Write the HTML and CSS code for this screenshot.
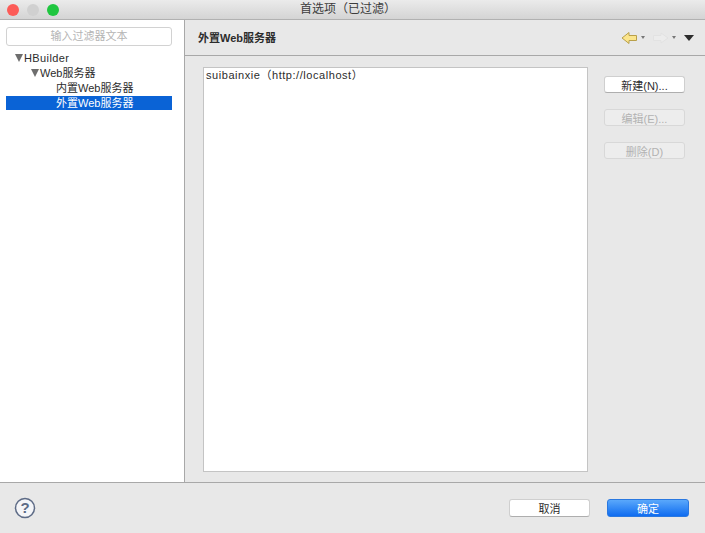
FILE: index.html
```html
<!DOCTYPE html>
<html>
	<head>
		<meta charset="utf-8">
		<title>首选项（已过滤）</title>
		<link rel="stylesheet" href="styles.css">
	</head>
	<body>
		<div class="titlebar">
			<div class="lights">
				<span class="light red"></span>
				<span class="light grey"></span>
				<span class="light green"></span>
			</div>
			<div class="title">首选项（已过滤）</div>
		</div>
		<div class="main">
			<div class="sidebar">
				<div class="filter">输入过滤器文本</div>
				<div class="tree">
					<div class="row level0"><span class="arrow"></span>HBuilder</div>
					<div class="row level1"><span class="arrow"></span>Web服务器</div>
					<div class="row level2">内置Web服务器</div>
					<div class="row level2 selected">外置Web服务器</div>
				</div>
			</div>
			<div class="panel">
				<div class="panel_head">
					<div class="panel_title">外置Web服务器</div>
					<div class="tools">
						<svg class="back" width="17" height="14" viewBox="0 0 17 14">
							<path d="M1 7 L8 1.500 V4.500 H15.500 V9.500 H8 V12.500 Z" fill="#fbe58c" stroke="#b9a04a" stroke-width="1"/>
						</svg>
						<span class="drop small"></span>
						<svg class="forward" width="17" height="14" viewBox="0 0 17 14">
							<path d="M16 7 L9 2 V4.500 H1.500 V9.500 H9 V12 Z" fill="#ececec" stroke="#e2e2e2" stroke-width="1"/>
						</svg>
						<span class="drop small"></span>
						<span class="drop big"></span>
					</div>
				</div>
				<div class="panel_body">
					<div class="list">suibainxie（http://localhost）</div>
					<div class="side_buttons">
						<button class="btn">新建(N)...</button>
						<button class="btn off">编辑(E)...</button>
						<button class="btn off">删除(D)</button>
					</div>
				</div>
			</div>
		</div>
		<div class="footer">
			<svg class="help" width="22" height="22" viewBox="0 0 22 22">
				<circle cx="11" cy="11" r="9.500" fill="#f4f5f8" stroke="#5d6b86" stroke-width="1.500"/>
				<text x="11" y="16" text-anchor="middle" class="help_mark">?</text>
			</svg>
			<div class="footer_buttons">
				<button class="btn wide">取消</button>
				<button class="btn wide primary">确定</button>
			</div>
		</div>
	</body>
</html>
```
FILE: styles.css
```css
html, body {
	margin: 0;
	padding: 0;
}

body {
	width: 705px;
	height: 533px;
	overflow: hidden;
	display: flex;
	flex-direction: column;
	background: #e8e8e8;
	color: #2c2c2c;
	font-family: "Liberation Sans", "Noto Sans CJK SC", sans-serif;
	font-size: 11px;
}

.titlebar {
	height: 19px;
	flex: none;
	display: flex;
	align-items: center;
	position: relative;
	background: linear-gradient(#ebebeb, #d4d4d4);
	border-bottom: 1px solid #b1b1b1;
}

.lights {
	display: flex;
	gap: 8px;
	margin-left: 7px;
}

.light {
	width: 12px;
	height: 12px;
	border-radius: 50%;
}

.red {
	background: #fc5b57;
}

.grey {
	background: #d0d0d0;
}

.green {
	background: #1fc63f;
}

.title {
	position: absolute;
	left: 0;
	right: 9px;
	top: 0;
	line-height: 19px;
	text-align: center;
	font-size: 12px;
	color: #3c3c3c;
}

.main {
	flex: 1;
	display: flex;
	min-height: 0;
	border-bottom: 1px solid #a8a8a8;
}

.sidebar {
	width: 185px;
	flex: none;
	box-sizing: border-box;
	padding: 7px 12px 0 6px;
	background: #fff;
	border-right: 1px solid #a8a8a8;
}

.filter {
	height: 17px;
	line-height: 17px;
	border: 1px solid #d2d2d2;
	border-radius: 3px;
	text-align: center;
	color: #b4b4b4;
}

.tree {
	margin-top: 4px;
}

.row {
	height: 15px;
	line-height: 14px;
	white-space: nowrap;
	display: flex;
	align-items: center;
}

.level0 {
	padding-left: 9px;
	letter-spacing: 0.4px;
}

.level1 {
	padding-left: 25px;
}

.level2 {
	padding-left: 50px;
}

.row.selected {
	height: 14px;
	margin-top: 1px;
	background: #0a63d6;
	color: #fff;
}

.arrow {
	width: 0;
	height: 0;
	margin-right: 1px;
	border-left: 4px solid transparent;
	border-right: 4px solid transparent;
	border-top: 8px solid #6e6e6e;
}

.panel {
	flex: 1;
	display: flex;
	flex-direction: column;
	min-width: 0;
}

.panel_head {
	height: 35px;
	flex: none;
	display: flex;
	align-items: center;
	justify-content: space-between;
	padding: 0 11px 0 13px;
	border-bottom: 1px solid #a8a8a8;
}

.panel_title {
	font-weight: bold;
	font-size: 11px;
	margin-top: -2px;
}

.tools {
	display: flex;
	align-items: center;
}

.drop {
	width: 0;
	height: 0;
	border-left: 2px solid transparent;
	border-right: 2px solid transparent;
	border-top: 3px solid #777;
	margin: 0 7px 0 3px;
}

.drop + .drop.big {
	margin: 0 0 0 1px;
	border-left-width: 5px;
	border-right-width: 5px;
	border-top: 6px solid #2c2c2c;
}

.panel_body {
	flex: 1;
	display: flex;
	padding: 11px 20px 10px 18px;
	min-height: 0;
}

.list {
	width: 385px;
	flex: none;
	box-sizing: border-box;
	padding: 0 2px;
	line-height: 14px;
	letter-spacing: 0.55px;
	background: #fff;
	border: 1px solid #c4c4c4;
}

.side_buttons {
	display: flex;
	flex-direction: column;
	gap: 16px;
	margin-left: 16px;
	padding-top: 9px;
}

.btn {
	width: 81px;
	height: 17px;
	padding: 0 0 3px;
	background: #fff;
	border: 1px solid #cfcfcf;
	border-bottom-color: #aeaeae;
	border-radius: 3px;
	color: #2c2c2c;
	font: inherit;
}

.btn.off {
	background: #ededed;
	border-color: #d8d8d8;
	color: #b2b2b2;
}

.footer {
	height: 50px;
	flex: none;
	display: flex;
	align-items: center;
	justify-content: space-between;
	padding: 0 16px 0 14px;
}

.help {
	display: block;
}

.help_mark {
	font-size: 15px;
	font-weight: bold;
	fill: #5d6b86;
}

.footer_buttons {
	display: flex;
	gap: 17px;
}

.btn.wide {
	width: 81px;
	height: 18px;
}

.btn.primary {
	width: 82px;
	background: linear-gradient(#5aa8fb, #0f6cf0);
	border-color: #2a78e0;
	color: #fff;
}
```
